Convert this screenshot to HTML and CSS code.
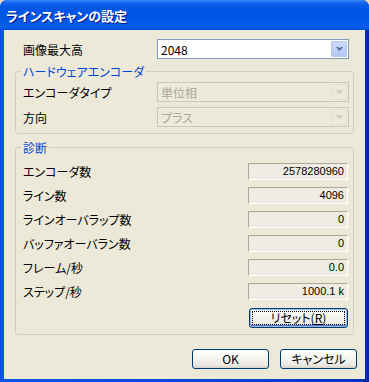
FILE: index.html
```html
<!DOCTYPE html>
<html lang="ja">
<head>
  <meta charset="UTF-8" />
  <title>ラインスキャンの設定</title>
  <link rel="stylesheet" href="styles.css">
</head>
<body>
  <div class="window">
    <div class="titlebar">
      <span class="title">ラインスキャンの設定</span>
    </div>
    <div class="client">
      <div class="row top-row">
        <span class="label">画像最大高</span>
        <div class="combo">
          <span class="combo-text">2048</span>
          <span class="drop">
            <svg width="7" height="4" viewBox="0 0 7 4"><path d="M0 0h2l1.5 1.5L5 0h2L3.5 4z" /></svg>
          </span>
        </div>
      </div>

      <fieldset class="group hw">
        <legend>ハードウェアエンコーダ</legend>
        <div class="row">
          <span class="label">エンコーダタイプ</span>
          <div class="combo disabled">
            <span class="combo-text">単位相</span>
            <span class="drop">
              <svg width="7" height="4" viewBox="0 0 7 4"><path d="M0 0h2l1.5 1.5L5 0h2L3.5 4z" /></svg>
            </span>
          </div>
        </div>
        <div class="row">
          <span class="label">方向</span>
          <div class="combo disabled">
            <span class="combo-text">プラス</span>
            <span class="drop">
              <svg width="7" height="4" viewBox="0 0 7 4"><path d="M0 0h2l1.5 1.5L5 0h2L3.5 4z" /></svg>
            </span>
          </div>
        </div>
      </fieldset>

      <fieldset class="group diag">
        <legend>診断</legend>
        <div class="stat"><span class="label">エンコーダ数</span><span class="value">2578280960</span></div>
        <div class="stat"><span class="label">ライン数</span><span class="value">4096</span></div>
        <div class="stat"><span class="label">ラインオーバラップ数</span><span class="value">0</span></div>
        <div class="stat"><span class="label">バッファオーバラン数</span><span class="value">0</span></div>
        <div class="stat"><span class="label">フレーム/秒</span><span class="value">0.0</span></div>
        <div class="stat"><span class="label">ステップ/秒</span><span class="value">1000.1 k</span></div>
        <div class="reset-row">
          <button class="btn default" type="button"><span class="focus">リセット(<u>R</u>)</span></button>
        </div>
      </fieldset>

      <div class="footer">
        <button class="btn" type="button">OK</button>
        <button class="btn" type="button">キャンセル</button>
      </div>
    </div>
  </div>
</body>
</html>
```

FILE: styles.css
```css
* {
  margin: 0;
  padding: 0;
  box-sizing: border-box;
}

html, body {
  width: 369px;
  height: 382px;
  background: #e8d8c0;
}

body {
  font-family: "Noto Sans CJK JP", "Liberation Sans", sans-serif;
  font-size: 12px;
  font-feature-settings: "palt";
  color: #000;
}

.window {
  width: 369px;
  height: 382px;
  display: flex;
  flex-direction: column;
  border-radius: 7px 7px 0 0;
  overflow: hidden;
  background: linear-gradient(to right, #0a3fd0 0, #0a5cf0 1px, #0856e8 3px, #0a48da 50%, #0a33c0 97%, #08259e 100%);
}

.titlebar {
  height: 30px;
  flex: none;
  padding-left: 6px;
  display: flex;
  align-items: center;
  background: linear-gradient(#3c8cf8 0, #1a6cf5 2px, #0a5ceb 5px, #0056e4 10px, #0055e3 70%, #0a60f0 88%, #0150dc 100%);
}

.title {
  color: #fff;
  font-weight: bold;
  font-size: 13px;
  line-height: 16px;
  padding-top: 1px;
  text-shadow: 1px 1px #0c1a8a;
}

.client {
  flex: 1;
  margin: 0 4px 3px 4px;
  background: #ece9d8;
  padding: 9px 8px 0 8px;
}

.row {
  display: flex;
  align-items: center;
  height: 20px;
}

.top-row {
  padding: 0 8px 0 11px;
}

.label {
  flex: 1;
  line-height: 15px;
}

.combo {
  width: 192px;
  height: 20px;
  display: flex;
  align-items: center;
  border: 1px solid #7f9db9;
  background: #fff;
  padding: 1px;
}

.combo-text {
  flex: 1;
  padding-left: 2px;
  line-height: 15px;
}

.drop {
  width: 16px;
  height: 16px;
  display: flex;
  align-items: center;
  justify-content: center;
  border: 1px solid #b6c9f2;
  border-radius: 1px;
  background: linear-gradient(#c9dafc, #b4c9f6);
}

.drop svg {
  fill: #4d6185;
}

.combo.disabled {
  border-color: #c9c7ba;
  background: #ebeadb;
  color: #aca899;
}

.combo.disabled .drop {
  border-color: #e3e1d6;
  background: #ece9d8;
}

.combo.disabled .drop svg {
  fill: #c9c7ba;
}

.group {
  margin: 0 3px;
  border: 1px solid #d0d0bf;
  border-radius: 3px;
  padding: 0 4px 6px 7px;
}

.group legend {
  color: #0046d5;
  line-height: 15px;
  padding: 0 2px;
  margin-left: -2px;
}

.hw {
  margin-top: 5px;
  padding-top: 3px;
}

.hw .row {
  margin-bottom: 5px;
}

.hw .row:last-child {
  margin-bottom: 0;
}

.diag {
  margin-top: 6px;
  padding-top: 8px;
}

.stat {
  display: flex;
  align-items: center;
  height: 17px;
  margin-bottom: 7px;
}

.stat:nth-of-type(6) {
  margin-bottom: 0;
}

.value {
  width: 100px;
  height: 17px;
  margin-right: 1px;
  border: 1px solid;
  border-color: #aca899 #fff #fff #aca899;
  background: repeating-conic-gradient(#f5f4ec 0 25%, #e8e6da 0 50%) 0 0 / 2px 2px;
  text-align: right;
  padding-right: 3px;
  font-family: "Liberation Sans", "Noto Sans CJK JP", sans-serif;
  font-size: 11px;
  line-height: 15px;
}

.reset-row {
  display: flex;
  justify-content: flex-end;
  margin-top: 8px;
}

.btn {
  width: 77px;
  height: 20px;
  border: 1px solid #003c74;
  border-radius: 3px;
  background: linear-gradient(#fff 0, #f6f6f2 40%, #ecebe5 80%, #d9d4c8 100%);
  font: inherit;
  font-feature-settings: "palt";
  color: #000;
  display: flex;
  align-items: center;
  justify-content: center;
  line-height: 14px;
}

.btn.default {
  width: 99px;
  margin-right: 1px;
  box-shadow: inset 0 0 0 1px #9bb8ec, inset 0 -1px 0 1px #4a78d8;
}

.focus {
  display: flex;
  align-items: center;
  justify-content: center;
  width: calc(100% - 6px);
  height: calc(100% - 6px);
  outline: 1px dotted #000;
}

.footer {
  display: flex;
  justify-content: flex-end;
  gap: 11px;
  margin-top: 14px;
}
```
